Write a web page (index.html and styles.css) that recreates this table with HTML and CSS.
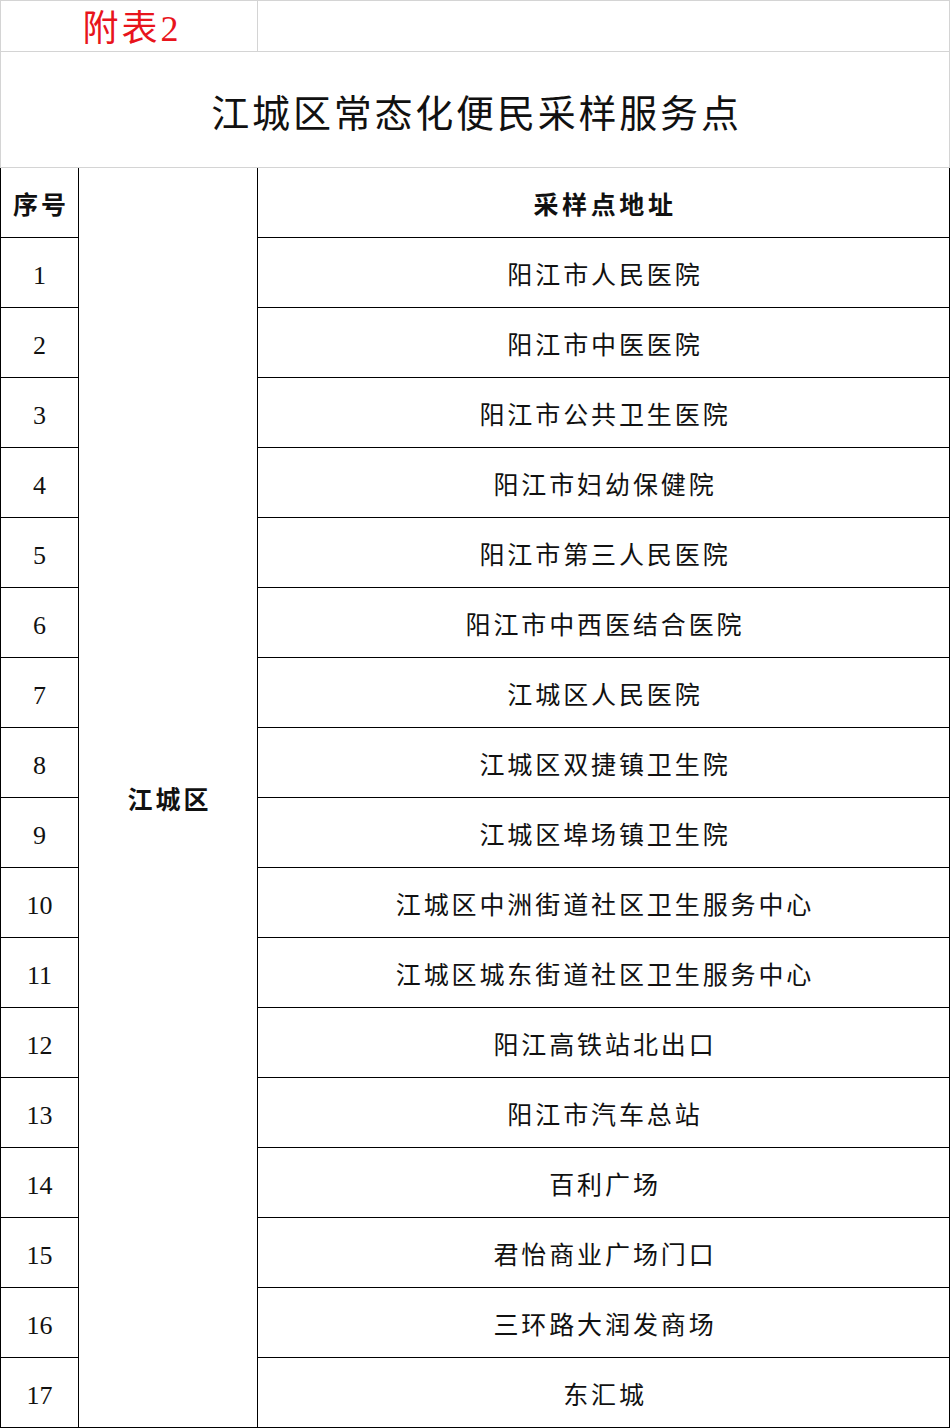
FILE: index.html
```html
<!DOCTYPE html>
<html lang="zh-CN">
<head>
<meta charset="utf-8">
<title>江城区常态化便民采样服务点</title>
<link rel="stylesheet" href="styles.css">
</head>
<body>
<table class="sheet">
  <colgroup>
    <col class="c-no">
    <col class="c-area">
    <col class="c-addr">
  </colgroup>
  <tr class="r-note">
    <td class="g note" colspan="2">附表2</td>
    <td class="g"></td>
  </tr>
  <tr class="r-title">
    <td class="g title" colspan="3">江城区常态化便民采样服务点</td>
  </tr>
  <tr class="r">
    <td class="b hd">序号</td>
    <td class="b area" rowspan="18">江城区</td>
    <td class="b hd addr-hd">采样点地址</td>
  </tr>
  <tr class="r"><td class="b num">1</td><td class="b addr">阳江市人民医院</td></tr>
  <tr class="r"><td class="b num">2</td><td class="b addr">阳江市中医医院</td></tr>
  <tr class="r"><td class="b num">3</td><td class="b addr">阳江市公共卫生医院</td></tr>
  <tr class="r"><td class="b num">4</td><td class="b addr">阳江市妇幼保健院</td></tr>
  <tr class="r"><td class="b num">5</td><td class="b addr">阳江市第三人民医院</td></tr>
  <tr class="r"><td class="b num">6</td><td class="b addr">阳江市中西医结合医院</td></tr>
  <tr class="r"><td class="b num">7</td><td class="b addr">江城区人民医院</td></tr>
  <tr class="r"><td class="b num">8</td><td class="b addr">江城区双捷镇卫生院</td></tr>
  <tr class="r"><td class="b num">9</td><td class="b addr">江城区埠场镇卫生院</td></tr>
  <tr class="r"><td class="b num">10</td><td class="b addr">江城区中洲街道社区卫生服务中心</td></tr>
  <tr class="r"><td class="b num">11</td><td class="b addr">江城区城东街道社区卫生服务中心</td></tr>
  <tr class="r"><td class="b num">12</td><td class="b addr">阳江高铁站北出口</td></tr>
  <tr class="r"><td class="b num">13</td><td class="b addr">阳江市汽车总站</td></tr>
  <tr class="r"><td class="b num">14</td><td class="b addr">百利广场</td></tr>
  <tr class="r"><td class="b num">15</td><td class="b addr">君怡商业广场门口</td></tr>
  <tr class="r"><td class="b num">16</td><td class="b addr">三环路大润发商场</td></tr>
  <tr class="r"><td class="b num">17</td><td class="b addr">东汇城</td></tr>
</table>
</body>
</html>
```
FILE: styles.css
```css
html, body {
  margin: 0;
  padding: 0;
  background: #ffffff;
}
body {
  font-family: "Liberation Serif", "Noto Sans CJK SC", serif;
  color: #111111;
}
.sheet {
  border-collapse: collapse;
  table-layout: fixed;
  width: 949px;
}
.c-no { width: 78px; }
.c-area { width: 179px; }
.c-addr { width: 692px; }

td {
  padding: 0;
  text-align: center;
  vertical-align: middle;
  white-space: nowrap;
  line-height: 1;
}
.g { border: 1px solid #d4d4d4; }
.b { border: 1px solid #000000; }

.r-note { height: 51px; }
.r-title { height: 116px; }
.r { height: 70px; }

.note {
  color: #e8141c;
  font-size: 36px;
  letter-spacing: 3px;
  padding-left: 6px;
  padding-top: 6px;
}
.title {
  font-size: 38px;
  letter-spacing: 2.8px;
  padding-left: 3px;
  padding-top: 8px;
}
.hd, .area {
  font-size: 25px;
  font-weight: bold;
  letter-spacing: 3px;
  padding-left: 3px;
  padding-top: 5px;
}
.addr-hd {
  letter-spacing: 3.6px;
}
.addr {
  font-size: 25px;
  letter-spacing: 2.9px;
  padding-left: 3px;
  padding-top: 6px;
}
.num {
  font-size: 26px;
  padding-top: 6px;
}
```
